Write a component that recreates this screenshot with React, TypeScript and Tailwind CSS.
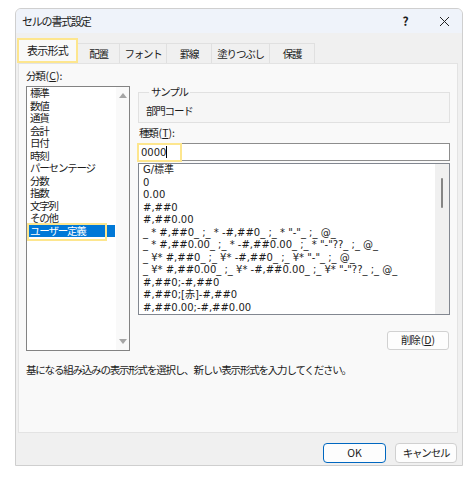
import React from "react";

const categories = [
  "標準",
  "数値",
  "通貨",
  "会計",
  "日付",
  "時刻",
  "パーセンテージ",
  "分数",
  "指数",
  "文字列",
  "その他",
  "ユーザー定義",
];

const formats = [
  "G/標準",
  "0",
  "0.00",
  "#,##0",
  "#,##0.00",
  '_ * #,##0_ ;_ * -#,##0_ ;_ * "-"_ ;_ @_',
  '_ * #,##0.00_ ;_ * -#,##0.00_ ;_ * "-"??_ ;_ @_',
  '_ ¥* #,##0_ ;_ ¥* -#,##0_ ;_ ¥* "-"_ ;_ @_',
  '_ ¥* #,##0.00_ ;_ ¥* -#,##0.00_ ;_ ¥* "-"??_ ;_ @_',
  "#,##0;-#,##0",
  "#,##0;[赤]-#,##0",
  "#,##0.00;-#,##0.00",
];

const tabs = [
  { label: "配置", w: "w-[42px]" },
  { label: "フォント", w: "w-[47px]" },
  { label: "罫線", w: "w-[45px]" },
  { label: "塗りつぶし", w: "w-[58px]" },
  { label: "保護", w: "w-[45px]" },
];

// access key part like "(C):", kept at normal spacing
const Key = ({ k, colon = true }: { k: string; colon?: boolean }) => (
  <span className="tracking-normal ml-[1px]">
    (<u>{k}</u>){colon ? ":" : ""}
  </span>
);

export default function App() {
  return (
    <div className="w-[475px] h-[483px] bg-white pt-[8px] pl-[15px] font-['Noto_Sans_CJK_JP',sans-serif] text-[10.5px] tracking-[-1.2px] text-[#1b1b1b]">
      <div className="w-[448px] h-[458px] border border-[#cfcfcf] rounded-t-[6px] bg-[#f0f0f0] flex flex-col overflow-hidden">
        {/* Title bar */}
        <div className="h-[24px] bg-[#eff3fa] flex items-center pl-[6px] pr-[8px]">
          <span className="text-[11px]">セルの書式設定</span>
          <span className="ml-auto w-[20px] text-center text-[12px] font-bold">?</span>
          <span className="ml-[19px] w-[20px] flex justify-center">
            <svg width="11" height="11" viewBox="0 0 11 11">
              <path d="M1 1L10 10M10 1L1 10" stroke="#222" strokeWidth="1" />
            </svg>
          </span>
        </div>

        {/* Tabs */}
        <div className="mt-[5px] ml-[1px] h-[25px] flex items-end">
          <div className="w-[61px] h-[25px] border-[2.5px] border-[#fde68e] bg-[#f9f9f9] flex items-center justify-center text-[11px] tracking-[-0.8px]">
            表示形式
          </div>
          {tabs.map((t) => (
            <div
              key={t.label}
              className={`${t.w} h-[20px] border border-l-0 border-b-0 border-[#e0e0e0] bg-[#f0f0f0] flex items-center justify-center`}
            >
              {t.label}
            </div>
          ))}
        </div>

        {/* Panel */}
        <div className="ml-[2px] w-[440px] h-[370px] border border-[#e3e3e3] bg-[#f9f9f9] pl-[7px] pt-[5px] flex flex-col">
          <div className="flex gap-[8px]">
            {/* Left column */}
            <div className="w-[104px] flex flex-col">
              <div className="h-[17px] leading-[14px]">
                分類<Key k="C" />
              </div>
              <div className="h-[265px] border border-[#838383] bg-white flex">
                <div className="w-[89px] px-[1px]">
                  {categories.map((c, i) =>
                    i === categories.length - 1 ? (
                      <div key={c} className="relative h-[12.5px] leading-[12.5px] pl-[2px] bg-[#0078d7] text-white">
                        {c}
                        <div className="absolute left-[-1px] top-[-1.5px] w-[80px] h-[18px] border-[2.5px] border-[#fde68e]" />
                      </div>
                    ) : (
                      <div key={c} className="h-[12.5px] leading-[12.5px] pl-[2px]">
                        {c}
                      </div>
                    )
                  )}
                </div>
                <div className="w-[13px] bg-[#f9f9f9] flex flex-col items-center justify-between pt-[6px] pb-[6px]">
                  <svg width="8" height="5" viewBox="0 0 8 5">
                    <path d="M0 5L4 0L8 5Z" fill="#a5a5a5" />
                  </svg>
                  <svg width="8" height="5" viewBox="0 0 8 5">
                    <path d="M0 0L8 0L4 5Z" fill="#a5a5a5" />
                  </svg>
                </div>
              </div>
            </div>

            {/* Right column */}
            <div className="w-[312px] pt-[16px] flex flex-col">
              <fieldset className="h-[38px] border border-[#e1e1e1] bg-[#f6f6f6] pl-[7px]">
                <legend className="ml-[3px] px-[2px] leading-[14px]">サンプル</legend>
                <div className="pt-[5px] leading-[14px]">部門コード</div>
              </fieldset>
              <div className="mt-[3px] h-[14px] leading-[14px] pl-[1px]">
                種類<Key k="T" />
              </div>
              <div className="relative mt-[3px] h-[18px] border border-[#8d8d8d] bg-white pl-[2px] flex items-center font-['DejaVu_Sans','Noto_Sans_CJK_JP',sans-serif] text-[10px] tracking-normal">
                <span>0000</span>
                <span className="inline-block w-px h-[12px] bg-black" />
                <div className="absolute left-[-2px] top-[-1px] w-[45px] h-[19px] border-[2.5px] border-[#fde68e]" />
              </div>
              <div className="mt-[2px] h-[152px] border border-[#828790] bg-white flex">
                <div className="flex-1 pl-[4px] overflow-hidden font-['DejaVu_Sans','Noto_Sans_CJK_JP',sans-serif] text-[10px] tracking-normal">
                  {formats.map((f) => (
                    <div key={f} className="h-[12.5px] leading-[12.5px] whitespace-pre">
                      {f}
                    </div>
                  ))}
                </div>
                <div className="w-[14px] bg-[#f0f0f0] flex justify-center">
                  <div className="mt-[14px] w-[2px] h-[30px] bg-[#858585] rounded-full" />
                </div>
              </div>
              <button className="mt-[16px] self-end mr-[1px] w-[62px] h-[19px] border border-[#d1d1d1] rounded-[3px] bg-[#fdfdfd] text-[10.5px] leading-none">
                削除<Key k="D" colon={false} />
              </button>
            </div>
          </div>
          <div className="mt-[12px] leading-[14px]">
            基になる組み込みの表示形式を選択し、新しい表示形式を入力してください。
          </div>
        </div>

        {/* Buttons */}
        <div className="mt-[10px] mr-[5px] flex justify-end gap-[9px]">
          <button className="w-[63px] h-[20px] border border-[#0067c0] rounded-[4px] bg-[#fdfdfd] text-[10.5px] leading-none tracking-normal">
            OK
          </button>
          <button className="w-[62px] h-[20px] border border-[#d0d0d0] rounded-[4px] bg-[#fdfdfd] text-[10.5px] leading-none">
            キャンセル
          </button>
        </div>
      </div>
    </div>
  );
}
